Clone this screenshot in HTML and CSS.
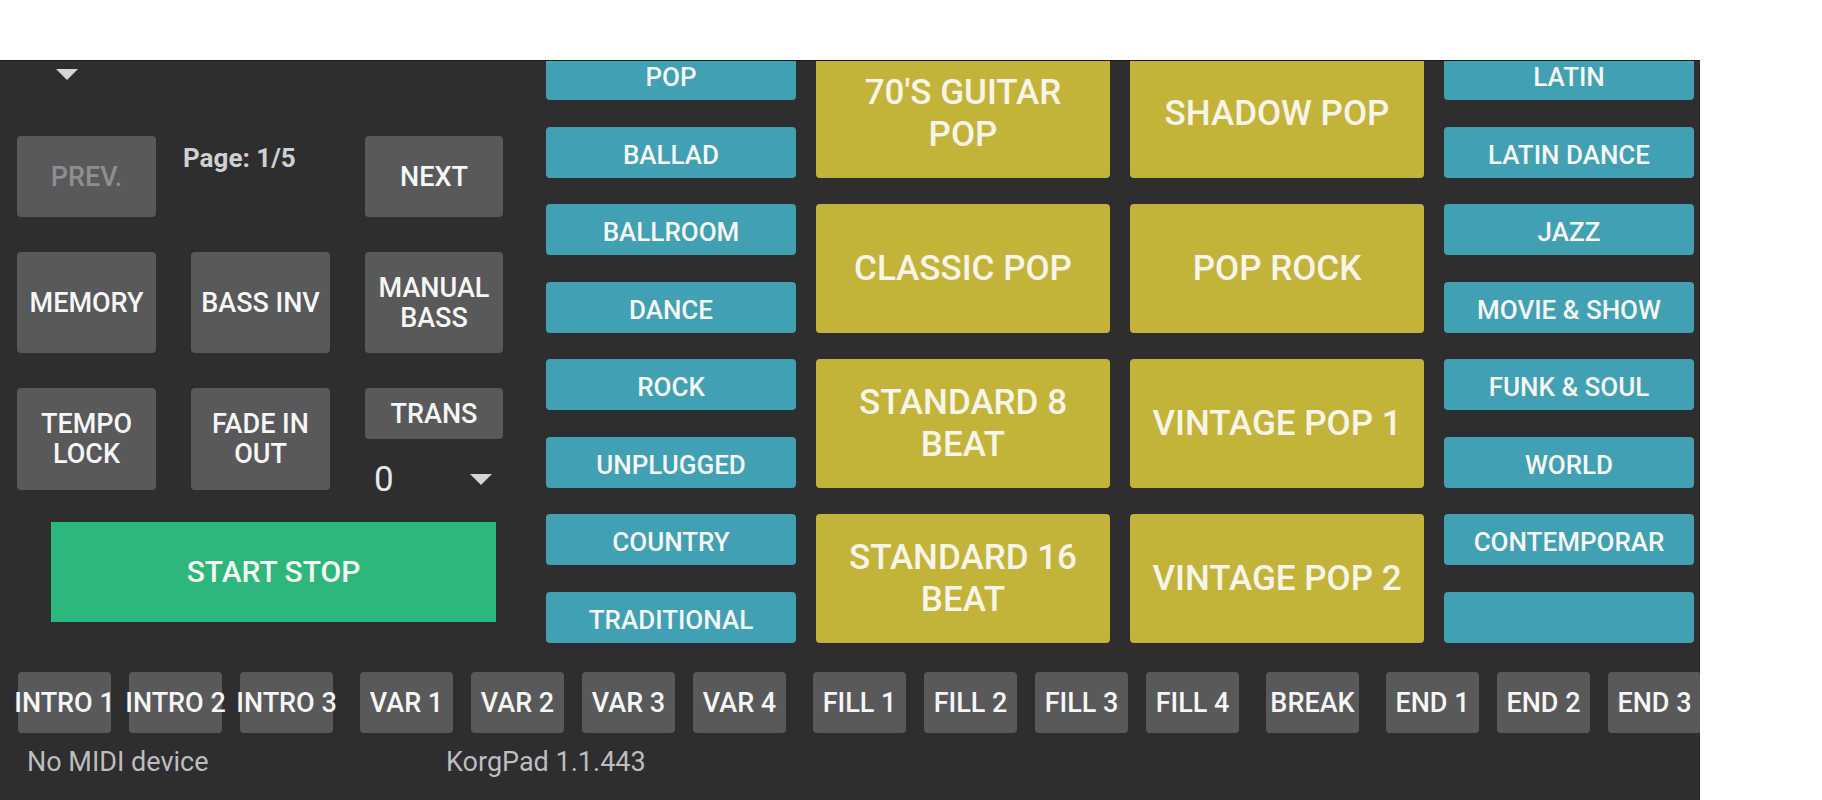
FILE: index.html
```html
<!DOCTYPE html>
<html lang="en">
<head>
    <meta charset="UTF-8">
    <meta name="viewport" content="width=device-width, initial-scale=1.0">
    <title>KorgPad</title>
    <link rel="stylesheet" href="styles.css">
</head>
<body>
    <div class="panel">
        <div class="main">
            <!-- Kontrol kiri -->
            <div class="side">
                <div class="arrow top-arrow"></div>
                <div class="pad-grid">
                    <button class="btn disabled">PREV.</button>
                    <div class="page">Page: 1/5</div>
                    <button class="btn">NEXT</button>

                    <button class="btn">MEMORY</button>
                    <button class="btn">BASS INV</button>
                    <button class="btn">MANUAL<br>BASS</button>

                    <button class="btn">TEMPO<br>LOCK</button>
                    <button class="btn">FADE IN<br>OUT</button>
                    <div class="trans">
                        <button class="btn trans-btn">TRANS</button>
                        <div class="spinner">
                            <span class="spin-value">0</span>
                            <div class="arrow"></div>
                        </div>
                    </div>

                    <button class="btn start">START STOP</button>
                </div>
            </div>

            <!-- Daftar style (di-scroll sedikit) -->
            <div class="styles">
                <div class="style-grid">
                    <div class="pair">
                        <button class="genre">POP</button>
                        <button class="genre">BALLAD</button>
                    </div>
                    <button class="style">70'S GUITAR POP</button>
                    <button class="style">SHADOW POP</button>
                    <div class="pair">
                        <button class="genre">LATIN</button>
                        <button class="genre">LATIN DANCE</button>
                    </div>

                    <div class="pair">
                        <button class="genre">BALLROOM</button>
                        <button class="genre">DANCE</button>
                    </div>
                    <button class="style">CLASSIC POP</button>
                    <button class="style">POP ROCK</button>
                    <div class="pair">
                        <button class="genre">JAZZ</button>
                        <button class="genre">MOVIE &amp; SHOW</button>
                    </div>

                    <div class="pair">
                        <button class="genre">ROCK</button>
                        <button class="genre">UNPLUGGED</button>
                    </div>
                    <button class="style">STANDARD 8 BEAT</button>
                    <button class="style">VINTAGE POP 1</button>
                    <div class="pair">
                        <button class="genre">FUNK &amp; SOUL</button>
                        <button class="genre">WORLD</button>
                    </div>

                    <div class="pair">
                        <button class="genre">COUNTRY</button>
                        <button class="genre">TRADITIONAL</button>
                    </div>
                    <button class="style">STANDARD 16 BEAT</button>
                    <button class="style">VINTAGE POP 2</button>
                    <div class="pair">
                        <button class="genre">CONTEMPORAR</button>
                        <button class="genre"></button>
                    </div>
                </div>
            </div>
        </div>

        <!-- Tombol bagian lagu -->
        <div class="parts">
            <div class="group">
                <button class="part">INTRO 1</button>
                <button class="part">INTRO 2</button>
                <button class="part">INTRO 3</button>
            </div>
            <div class="group">
                <button class="part">VAR 1</button>
                <button class="part">VAR 2</button>
                <button class="part">VAR 3</button>
                <button class="part">VAR 4</button>
            </div>
            <div class="group">
                <button class="part">FILL 1</button>
                <button class="part">FILL 2</button>
                <button class="part">FILL 3</button>
                <button class="part">FILL 4</button>
            </div>
            <div class="group">
                <button class="part">BREAK</button>
            </div>
            <div class="group">
                <button class="part">END 1</button>
                <button class="part">END 2</button>
                <button class="part">END 3</button>
            </div>
        </div>

        <div class="status">
            <span class="midi">No MIDI device</span>
            <span class="version">KorgPad 1.1.443</span>
        </div>
    </div>
</body>
</html>
```

FILE: styles.css
```css
* {
    margin: 0;
    padding: 0;
    box-sizing: border-box;
    font-family: Roboto, 'Liberation Sans', sans-serif;
}

body {
    background-color: #fff;
    width: 1822px;
    height: 800px;
    overflow: hidden;
}

/* Panel utama */
.panel {
    margin-top: 60px;
    width: 1700px;
    height: 740px;
    background-color: #2e2d2f;
    border-top: 1px solid #1c1c1c;
    overflow: hidden;
}

.main {
    display: flex;
    height: 599px;
}

button {
    border: none;
    border-radius: 4px;
    color: #f6f6f6;
    font-weight: 500;
    display: flex;
    align-items: center;
    justify-content: center;
    text-align: center;
}

/* Kontrol kiri */
.side {
    width: 546px;
    flex-shrink: 0;
    padding-left: 17px;
}

.arrow {
    width: 0;
    height: 0;
    border-left: 11px solid transparent;
    border-right: 11px solid transparent;
    border-top: 11px solid #d6d6d6;
}

.top-arrow {
    margin: 8px 0 0 39px;
}

.pad-grid {
    display: grid;
    grid-template-columns: 139px 139px 138px;
    grid-template-rows: 81px 101px 102px 100px;
    column-gap: 35px;
    row-gap: 35px;
    margin-top: 56px;
}

.btn {
    background-color: #59595b;
    font-size: 27px;
    line-height: 30px;
}

.btn.disabled {
    color: #8e8e8e;
}

.page {
    margin: 7px 0 0 -8px;
    color: #d0d0d0;
    font-size: 26px;
    font-weight: 700;
    line-height: 30px;
}

.trans {
    display: flex;
    flex-direction: column;
}

.trans-btn {
    height: 51px;
    flex-shrink: 0;
}

.spinner {
    display: flex;
    align-items: center;
    justify-content: space-between;
    padding: 23px 11px 0 9px;
}

.spin-value {
    color: #e8e8e8;
    font-size: 35px;
    line-height: 35px;
}

.start {
    grid-column: 1 / 4;
    margin: -3px 7px 0 34px;
    height: 100px;
    background-color: #2db77b;
    border-radius: 0;
    font-size: 30px;
}

/* Grid style */
.styles {
    flex: 1;
    overflow: hidden;
}

.style-grid {
    display: grid;
    grid-template-columns: 250px 294px 294px 250px;
    grid-auto-rows: 129px;
    column-gap: 20px;
    row-gap: 26px;
    margin-top: -12px;
}

.pair {
    display: flex;
    flex-direction: column;
    gap: 27px;
}

.genre {
    height: 51px;
    background-color: #41a0b2;
    font-size: 26px;
    padding-top: 4px;
}

.style {
    background-color: #c4b33b;
    color: #f7f5e8;
    font-size: 35px;
    line-height: 42px;
    padding: 0 10px;
}

/* Tombol bagian */
.parts {
    display: flex;
    gap: 27px;
    margin-top: 12px;
    padding-left: 18px;
}

.group {
    display: flex;
    gap: 18px;
}

.part {
    width: 93px;
    height: 61px;
    background-color: #59595b;
    font-size: 27px;
    white-space: nowrap;
}

/* Status bawah */
.status {
    display: flex;
    margin-top: 13px;
    padding-left: 27px;
    color: #bdbdbd;
    font-size: 27px;
    line-height: 32px;
}

.midi {
    width: 419px;
}
```
